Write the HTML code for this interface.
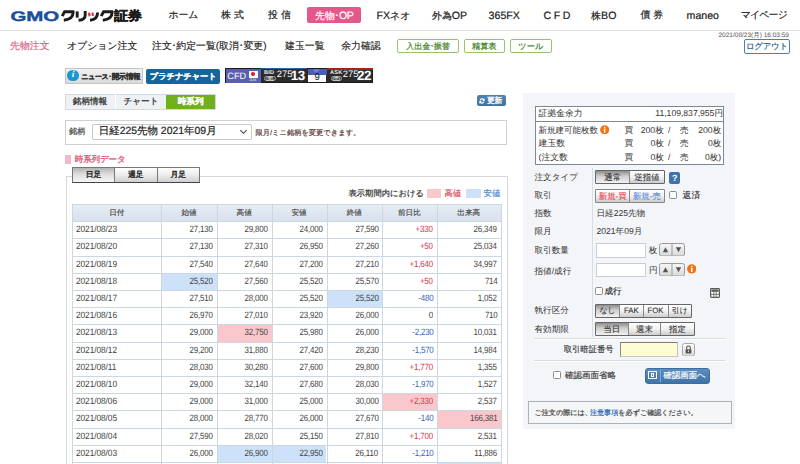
<!DOCTYPE html>
<html><head><meta charset="utf-8">
<style>
*{margin:0;padding:0;box-sizing:border-box}
html,body{width:800px;height:464px;overflow:hidden;background:#fff}
body{position:relative;font-family:"Liberation Sans",sans-serif;color:#333;text-rendering:geometricPrecision}
.a{position:absolute;white-space:nowrap}
.nav{top:10.3px;font-size:9.9px;color:#222;line-height:12px;-webkit-text-stroke:0.2px currentColor}
.l{font-size:10.6px}
.sub{top:40.6px;font-size:9.9px;color:#222;line-height:12px;-webkit-text-stroke:0.15px currentColor}
.gbtn{top:38.8px;height:14.4px;border:1px solid #93c46f;border-radius:2px;color:#3f7f24;font-size:8.2px;line-height:13.8px;text-align:center;-webkit-text-stroke:0.2px currentColor}

.th{height:17.25px;line-height:17.25px;font-size:7.6px;color:#444;text-align:center;-webkit-text-stroke:0.15px #444}
.td{height:17.2px;line-height:16px;font-size:9.1px;color:#444;letter-spacing:-0.2px;transform:scaleX(0.87);transform-origin:100% 50%}
.dd{letter-spacing:-0.1px;transform:scaleX(0.92);transform-origin:0 50%}
.hl{left:72.25px;width:428.45px;height:1px;background:#cdd7e1}
.vl{top:204px;height:262px;width:1px;background:#cdd7e1}
.tab{top:94px;height:15.5px;line-height:15.5px;font-size:8.6px;color:#444;text-align:center;font-weight:bold}
.dt{top:167px;height:15.5px;line-height:14px;font-size:7.8px;color:#222;text-align:center;-webkit-text-stroke:0.35px #222;border:1px solid #777;border-bottom-color:#444;background:linear-gradient(#ffffff,#ececec 50%,#cfcfcf)}
.lbl{left:534.5px;font-size:8.6px;color:#333;line-height:10px}
.val{left:596.5px;font-size:8.6px;color:#333;line-height:10px}
.sbtn{border:1px solid #8a8a8a;background:linear-gradient(#fff,#e0e0e0);font-size:8.2px;color:#333;text-align:center}
</style></head><body>

<!-- HEADER -->
<svg class="a" style="left:0;top:0" width="150" height="30">
<text x="10.4" y="20.5" font-family="Liberation Sans" font-weight="bold" font-size="13.8" fill="#1a4f9c" stroke="#1a4f9c" stroke-width="0.4" textLength="48.9" lengthAdjust="spacingAndGlyphs">GMO</text>
<g fill="none" stroke="#1c1c1c" stroke-width="2.9" stroke-linecap="butt" stroke-linejoin="round">
<path d="M62.2 16.2L64.6 11.6"/>
<path d="M63.6 11.8H73.2C73.2 16.5 70.5 19.6 63.8 20.2"/>
<path d="M77.2 11.4V17.6"/>
<path d="M85.2 11V15.2C85.2 18.4 83.2 19.9 78.6 20.3"/>
<path d="M97.6 12.6C97.6 17.2 95.4 19.8 90 20.3"/>
<path d="M101.2 16.2L103.6 11.6"/>
<path d="M102.6 11.8H112.2C112.2 16.5 109.5 19.6 102.8 20.2"/>
</g>
<g fill="none" stroke="#d8283a" stroke-width="2.1">
<path d="M89 12.8L89.6 16.2"/>
<path d="M92.4 12.6L92.9 15.8"/>
</g>

<text x="114.3" y="20.2" font-weight="bold" font-size="12.6" fill="#1a1a1a" textLength="27.6" lengthAdjust="spacingAndGlyphs" stroke="#1a1a1a" stroke-width="0.5">証券</text>
</svg>
<div class="a nav" style="left:168.4px">ホーム</div>
<div class="a nav" style="left:221px;letter-spacing:3px">株式</div>
<div class="a nav" style="left:268px;letter-spacing:3px">投信</div>
<div class="a" style="left:307px;top:6.5px;width:54px;height:16.5px;background:#e4578a;border-radius:2px"></div>
<div class="a nav" style="left:315px;color:#fff">先物<span style="margin:0 -0.4px">･</span><span class="l" style="letter-spacing:-0.3px">OP</span></div>
<div class="a nav" style="left:376.5px"><span class="l">FX</span>ネオ</div>
<div class="a nav" style="left:432px">外為<span class="l">OP</span></div>
<div class="a nav l" style="left:488.6px">365FX</div>
<div class="a nav l" style="left:543.5px;letter-spacing:2.6px">CFD</div>
<div class="a nav" style="left:591px">株<span class="l" style="letter-spacing:0.3px">BO</span></div>
<div class="a nav" style="left:640.4px;letter-spacing:3px">債券</div>
<div class="a nav l" style="left:686.6px">maneo</div>
<div class="a nav" style="left:740.7px;letter-spacing:-0.8px">マイページ</div>
<div class="a" style="left:0;top:30px;width:800px;height:1px;background:#e2e2e2"></div>

<!-- SUBNAV -->
<div class="a sub" style="left:10px;color:#d9607f">先物注文</div>
<div class="a sub" style="left:67px">オプション注文</div>
<div class="a sub" style="left:152px">注文<span style="margin:0 -0.2px">･</span>約定一覧(取消<span style="margin:0 -0.2px">･</span>変更)</div>
<div class="a sub" style="left:285px">建玉一覧</div>
<div class="a sub" style="left:341.2px">余力確認</div>
<div class="a gbtn" style="left:397px;width:62px">入出金<span style="margin:0 -0.5px">･</span>振替</div>
<div class="a gbtn" style="left:464px;width:40.5px">精算表</div>
<div class="a gbtn" style="left:510px;width:41.6px">ツール</div>
<div class="a" style="left:718.5px;top:31.5px;font-size:6.5px;color:#555;line-height:7px">2021/08/23(月) 16:03:59</div>
<div class="a" style="left:743.7px;top:38.7px;width:46.5px;height:15px;border:1px solid #4a7fb5;border-radius:2px;color:#2c5d8f;font-size:8.4px;line-height:13px;text-align:center;letter-spacing:-0.2px;-webkit-text-stroke:0.2px currentColor">ログアウト</div>


<!-- TOOLBAR -->
<div class="a" style="left:64.9px;top:68.2px;width:78px;height:15.7px;border:1px solid #c2c6ca;background:linear-gradient(#f2f2f2,#dadada)"></div>
<div class="a" style="left:67.3px;top:69.9px;width:11.5px;height:11.5px;border-radius:50%;background:#1b98cf;color:#fff;font-size:9.5px;line-height:11.5px;text-align:center;font-weight:bold;font-style:italic;font-family:'Liberation Serif',serif">i</div>
<div class="a" style="left:81.2px;top:72.2px;font-size:7px;line-height:9px;color:#333;font-weight:bold;letter-spacing:-0.3px;-webkit-text-stroke:0.2px #333">ニュース<span style="margin:0 0.2px 0 -0.2px">･</span><span style="font-size:7.6px;letter-spacing:-0.45px">開示情報</span></div>
<div class="a" style="left:146.4px;top:68.8px;width:73.6px;height:15px;border-radius:2px;background:#15649a;color:#fff;font-size:8.2px;line-height:15px;text-align:center;font-weight:bold;-webkit-text-stroke:0.2px #fff">プラチナチャート</div>

<!-- CFD ticker -->
<div class="a" style="left:225px;top:68.2px;width:147.5px;height:15px;background:#2b2b2b;border:1px solid #1c1c1c"></div>
<div class="a" style="left:225.6px;top:69px;width:35px;height:13.5px;background:#5a5fae"></div>
<div class="a" style="left:227.3px;top:69.5px;font-size:9.2px;line-height:12px;color:#fff">CFD</div>
<div class="a" style="left:248.5px;top:70.5px;width:9px;height:7.5px;background:#fbfbfb"></div>
<div class="a" style="left:251px;top:72.3px;width:4px;height:4px;border-radius:50%;background:#d81c2c"></div>
<div class="a" style="left:249.3px;top:78.3px;font-size:3.6px;line-height:4px;color:#ddd;font-weight:bold">JUS</div>
<div class="a" style="left:261px;top:68.2px;width:46px;height:1.3px;background:#2f63a8"></div>
<div class="a" style="left:327px;top:68.2px;width:45.5px;height:1.6px;background:#a52222"></div>
<div class="a" style="left:264px;top:70px;font-size:5.6px;line-height:6px;color:#f4f4f4;font-weight:bold;letter-spacing:0.2px">BID</div>
<div class="a" style="left:264.3px;top:76.4px;width:11.5px;height:4.8px;border-radius:2.4px;border:0.8px solid #aaa"></div>
<div class="a" style="left:266.3px;top:76.3px;font-size:4.2px;line-height:5px;color:#eee;font-weight:bold">(買)</div>
<div class="a" style="left:276.8px;top:69.4px;font-size:9.4px;line-height:9px;color:#fff">275</div>
<div class="a" style="left:290.8px;top:69.2px;font-size:13.4px;line-height:13px;color:#fff;font-weight:bold;letter-spacing:-0.4px">13</div>
<div class="a" style="left:307.5px;top:68.6px;width:19px;height:6px;background:#4a5db8"></div>
<div class="a" style="left:313.5px;top:68.4px;font-size:4px;line-height:5px;color:#b9c0ff">SP</div>
<div class="a" style="left:308px;top:74.5px;width:18px;height:7.8px;background:#fbfbfb"></div>
<div class="a" style="left:314.6px;top:72.8px;font-size:9.5px;line-height:10px;color:#111">9</div>
<div class="a" style="left:330px;top:70px;font-size:5.6px;line-height:6px;color:#f4f4f4;font-weight:bold;letter-spacing:0.2px">ASK</div>
<div class="a" style="left:330.8px;top:76.4px;width:11.5px;height:4.8px;border-radius:2.4px;border:0.8px solid #aaa"></div>
<div class="a" style="left:332.8px;top:76.3px;font-size:4.2px;line-height:5px;color:#eee;font-weight:bold">(売)</div>
<div class="a" style="left:342.8px;top:69.4px;font-size:9.4px;line-height:9px;color:#fff">275</div>
<div class="a" style="left:357px;top:69.2px;font-size:13.4px;line-height:13px;color:#fff;font-weight:bold;letter-spacing:-0.4px">22</div>

<!-- TABS -->
<div class="a" style="left:65px;top:93.6px;width:151px;height:16px;border:1px solid #d3d9df;background:#eef2f5"></div>
<div class="a tab" style="left:65px;width:50px">銘柄情報</div>
<div class="a" style="left:115px;top:94px;width:1px;height:15px;background:#fff"></div>
<div class="a tab" style="left:116px;width:50px">チャート</div>
<div class="a tab" style="left:166px;top:94.8px;height:13.8px;line-height:13.8px;width:49.2px;background:#6fb01c;color:#fff;font-weight:bold;-webkit-text-stroke:0.2px #fff">時系列</div>
<div class="a" style="left:477.2px;top:95.1px;width:28.7px;height:11.3px;border-radius:2px;background:linear-gradient(#5581b0,#41709f)"></div>
<svg class="a" style="left:479.3px;top:97.8px" width="6" height="6" viewBox="0 0 6 6"><path d="M4.9 1.9A2.2 2.2 0 0 0 1.1 2.2M1.1 4.1A2.2 2.2 0 0 0 4.9 3.8" fill="none" stroke="#fff" stroke-width="1.2"/><path d="M5.7 0.3V2.9H3.1Z" fill="#fff"/><path d="M0.3 5.7V3.1H2.9Z" fill="#fff"/></svg>
<div class="a" style="left:487px;top:96px;font-size:7.9px;line-height:10px;color:#fff;-webkit-text-stroke:0.3px #fff;letter-spacing:-0.3px">更新</div>

<!-- SELECT -->
<div class="a" style="left:65px;top:120px;width:442.4px;height:24.6px;border:1px solid #ccd1d6"></div>
<div class="a" style="left:69px;top:127px;font-size:8.2px;line-height:10px;color:#555;-webkit-text-stroke:0.25px #555">銘柄</div>
<div class="a" style="left:92px;top:124px;width:160px;height:16px;border:1px solid #c9c9c9;border-radius:2px;background:#fff"></div>
<div class="a" style="left:98.8px;top:126.2px;font-size:10.45px;line-height:12px;color:#222;-webkit-text-stroke:0.2px #222">日経225先物 2021年09月</div>
<div class="a" style="left:241px;top:128px;width:5px;height:5px;border-right:1.3px solid #444;border-bottom:1.3px solid #444;transform:rotate(45deg)"></div>
<div class="a" style="left:255.6px;top:127.6px;font-size:7.25px;line-height:9px;color:#5e3c3c;-webkit-text-stroke:0.2px #5e3c3c">限月/ミニ銘柄を変更できます。</div>

<!-- DATA HEADING -->
<div class="a" style="left:65.3px;top:154.6px;width:5.7px;height:9px;background:#f3b9c9"></div>
<div class="a" style="left:74.8px;top:154px;font-size:8.5px;line-height:11px;color:#e0607f;letter-spacing:-0.1px;-webkit-text-stroke:0.35px #e0607f">時系列データ</div>
<div class="a" style="left:65.5px;top:175.5px;width:442px;height:300px;border:1px solid #d5d9dd"></div>
<div class="a dt" style="left:72px;width:43px;background:linear-gradient(#b4b4b4,#dedede 45%,#f6f6f6)">日足</div>
<div class="a dt" style="left:114px;width:43.5px">週足</div>
<div class="a dt" style="left:156.5px;width:43.5px">月足</div>
<div class="a" style="left:348.5px;top:187.6px;font-size:8.3px;line-height:10px;color:#333;-webkit-text-stroke:0.2px #333">表示期間内における</div>
<div class="a" style="left:427px;top:188.6px;width:14px;height:9.8px;background:#fac8cc"></div>
<div class="a" style="left:444.5px;top:187.6px;font-size:8.3px;line-height:10px;color:#e04858;-webkit-text-stroke:0.2px #e04858">高値</div>
<div class="a" style="left:466px;top:188.6px;width:14.6px;height:9.8px;background:#cde2f8"></div>
<div class="a" style="left:483.6px;top:187.6px;font-size:8.3px;line-height:10px;color:#4a88d8;-webkit-text-stroke:0.2px #4a88d8">安値</div>

<div class="a" style="left:72.25px;top:204.00px;width:428.45px;height:17.25px;background:linear-gradient(#e6edf5,#d8e2ed)"></div>
<div class="a th" style="left:72.25px;top:204.00px;width:89.00px">日付</div>
<div class="a th" style="left:161.25px;top:204.00px;width:55.45px">始値</div>
<div class="a th" style="left:216.70px;top:204.00px;width:55.00px">高値</div>
<div class="a th" style="left:271.70px;top:204.00px;width:54.80px">安値</div>
<div class="a th" style="left:326.50px;top:204.00px;width:55.50px">終値</div>
<div class="a th" style="left:382.00px;top:204.00px;width:54.70px">前日比</div>
<div class="a th" style="left:436.70px;top:204.00px;width:64.00px">出来高</div>
<div class="a td dd" style="left:75.65px;top:221.25px">2021/08/23</div>
<div class="a td" style="right:586.90px;top:221.25px;">27,130</div>
<div class="a td" style="right:531.90px;top:221.25px;">29,800</div>
<div class="a td" style="right:477.10px;top:221.25px;">24,000</div>
<div class="a td" style="right:421.60px;top:221.25px;">27,590</div>
<div class="a td" style="right:366.90px;top:221.25px;color:#d8344f;">+330</div>
<div class="a td" style="right:302.90px;top:221.25px;">26,349</div>
<div class="a td dd" style="left:75.65px;top:238.45px">2021/08/20</div>
<div class="a td" style="right:586.90px;top:238.45px;">27,130</div>
<div class="a td" style="right:531.90px;top:238.45px;">27,310</div>
<div class="a td" style="right:477.10px;top:238.45px;">26,950</div>
<div class="a td" style="right:421.60px;top:238.45px;">27,260</div>
<div class="a td" style="right:366.90px;top:238.45px;color:#d8344f;">+50</div>
<div class="a td" style="right:302.90px;top:238.45px;">25,034</div>
<div class="a td dd" style="left:75.65px;top:255.65px">2021/08/19</div>
<div class="a td" style="right:586.90px;top:255.65px;">27,540</div>
<div class="a td" style="right:531.90px;top:255.65px;">27,640</div>
<div class="a td" style="right:477.10px;top:255.65px;">27,200</div>
<div class="a td" style="right:421.60px;top:255.65px;">27,210</div>
<div class="a td" style="right:366.90px;top:255.65px;color:#d8344f;">+1,640</div>
<div class="a td" style="right:302.90px;top:255.65px;">34,997</div>
<div class="a" style="left:161.25px;top:272.85px;width:55.45px;height:17.20px;background:#cde2f8"></div>
<div class="a td dd" style="left:75.65px;top:272.85px">2021/08/18</div>
<div class="a td" style="right:586.90px;top:272.85px;">25,520</div>
<div class="a td" style="right:531.90px;top:272.85px;">27,560</div>
<div class="a td" style="right:477.10px;top:272.85px;">25,520</div>
<div class="a td" style="right:421.60px;top:272.85px;">25,570</div>
<div class="a td" style="right:366.90px;top:272.85px;color:#d8344f;">+50</div>
<div class="a td" style="right:302.90px;top:272.85px;">714</div>
<div class="a" style="left:326.50px;top:290.05px;width:55.50px;height:17.20px;background:#cde2f8"></div>
<div class="a td dd" style="left:75.65px;top:290.05px">2021/08/17</div>
<div class="a td" style="right:586.90px;top:290.05px;">27,510</div>
<div class="a td" style="right:531.90px;top:290.05px;">28,000</div>
<div class="a td" style="right:477.10px;top:290.05px;">25,520</div>
<div class="a td" style="right:421.60px;top:290.05px;">25,520</div>
<div class="a td" style="right:366.90px;top:290.05px;color:#3a63b8;">-480</div>
<div class="a td" style="right:302.90px;top:290.05px;">1,052</div>
<div class="a td dd" style="left:75.65px;top:307.25px">2021/08/16</div>
<div class="a td" style="right:586.90px;top:307.25px;">26,970</div>
<div class="a td" style="right:531.90px;top:307.25px;">27,010</div>
<div class="a td" style="right:477.10px;top:307.25px;">23,920</div>
<div class="a td" style="right:421.60px;top:307.25px;">26,000</div>
<div class="a td" style="right:366.90px;top:307.25px;">0</div>
<div class="a td" style="right:302.90px;top:307.25px;">710</div>
<div class="a" style="left:216.70px;top:324.45px;width:55.00px;height:17.20px;background:#fac8cc"></div>
<div class="a td dd" style="left:75.65px;top:324.45px">2021/08/13</div>
<div class="a td" style="right:586.90px;top:324.45px;">29,000</div>
<div class="a td" style="right:531.90px;top:324.45px;">32,750</div>
<div class="a td" style="right:477.10px;top:324.45px;">25,980</div>
<div class="a td" style="right:421.60px;top:324.45px;">26,000</div>
<div class="a td" style="right:366.90px;top:324.45px;color:#3a63b8;">-2,230</div>
<div class="a td" style="right:302.90px;top:324.45px;">10,031</div>
<div class="a td dd" style="left:75.65px;top:341.65px">2021/08/12</div>
<div class="a td" style="right:586.90px;top:341.65px;">29,200</div>
<div class="a td" style="right:531.90px;top:341.65px;">31,880</div>
<div class="a td" style="right:477.10px;top:341.65px;">27,420</div>
<div class="a td" style="right:421.60px;top:341.65px;">28,230</div>
<div class="a td" style="right:366.90px;top:341.65px;color:#3a63b8;">-1,570</div>
<div class="a td" style="right:302.90px;top:341.65px;">14,984</div>
<div class="a td dd" style="left:75.65px;top:358.85px">2021/08/11</div>
<div class="a td" style="right:586.90px;top:358.85px;">28,030</div>
<div class="a td" style="right:531.90px;top:358.85px;">30,280</div>
<div class="a td" style="right:477.10px;top:358.85px;">27,600</div>
<div class="a td" style="right:421.60px;top:358.85px;">29,800</div>
<div class="a td" style="right:366.90px;top:358.85px;color:#d8344f;">+1,770</div>
<div class="a td" style="right:302.90px;top:358.85px;">1,355</div>
<div class="a td dd" style="left:75.65px;top:376.05px">2021/08/10</div>
<div class="a td" style="right:586.90px;top:376.05px;">29,000</div>
<div class="a td" style="right:531.90px;top:376.05px;">32,140</div>
<div class="a td" style="right:477.10px;top:376.05px;">27,680</div>
<div class="a td" style="right:421.60px;top:376.05px;">28,030</div>
<div class="a td" style="right:366.90px;top:376.05px;color:#3a63b8;">-1,970</div>
<div class="a td" style="right:302.90px;top:376.05px;">1,527</div>
<div class="a" style="left:382.00px;top:393.25px;width:54.70px;height:17.20px;background:#fac8cc"></div>
<div class="a td dd" style="left:75.65px;top:393.25px">2021/08/06</div>
<div class="a td" style="right:586.90px;top:393.25px;">29,000</div>
<div class="a td" style="right:531.90px;top:393.25px;">31,000</div>
<div class="a td" style="right:477.10px;top:393.25px;">25,000</div>
<div class="a td" style="right:421.60px;top:393.25px;">30,000</div>
<div class="a td" style="right:366.90px;top:393.25px;color:#d8344f;">+2,330</div>
<div class="a td" style="right:302.90px;top:393.25px;">2,537</div>
<div class="a" style="left:436.70px;top:410.45px;width:64.00px;height:17.20px;background:#fac8cc"></div>
<div class="a td dd" style="left:75.65px;top:410.45px">2021/08/05</div>
<div class="a td" style="right:586.90px;top:410.45px;">28,000</div>
<div class="a td" style="right:531.90px;top:410.45px;">28,770</div>
<div class="a td" style="right:477.10px;top:410.45px;">26,000</div>
<div class="a td" style="right:421.60px;top:410.45px;">27,670</div>
<div class="a td" style="right:366.90px;top:410.45px;color:#3a63b8;">-140</div>
<div class="a td" style="right:302.90px;top:410.45px;">166,381</div>
<div class="a td dd" style="left:75.65px;top:427.65px">2021/08/04</div>
<div class="a td" style="right:586.90px;top:427.65px;">27,590</div>
<div class="a td" style="right:531.90px;top:427.65px;">28,020</div>
<div class="a td" style="right:477.10px;top:427.65px;">25,150</div>
<div class="a td" style="right:421.60px;top:427.65px;">27,810</div>
<div class="a td" style="right:366.90px;top:427.65px;color:#d8344f;">+1,700</div>
<div class="a td" style="right:302.90px;top:427.65px;">2,531</div>
<div class="a" style="left:216.70px;top:444.85px;width:55.00px;height:17.20px;background:#cde2f8"></div>
<div class="a" style="left:271.70px;top:444.85px;width:54.80px;height:17.20px;background:#cde2f8"></div>
<div class="a td dd" style="left:75.65px;top:444.85px">2021/08/03</div>
<div class="a td" style="right:586.90px;top:444.85px;">26,000</div>
<div class="a td" style="right:531.90px;top:444.85px;">26,900</div>
<div class="a td" style="right:477.10px;top:444.85px;">22,950</div>
<div class="a td" style="right:421.60px;top:444.85px;">26,110</div>
<div class="a td" style="right:366.90px;top:444.85px;color:#3a63b8;">-1,210</div>
<div class="a td" style="right:302.90px;top:444.85px;">11,886</div>
<div class="a" style="left:436.70px;top:462.05px;width:64.00px;height:17.20px;background:#cde2f8"></div>
<div class="a td dd" style="left:75.65px;top:462.05px">2021/08/02</div>
<div class="a td" style="right:586.90px;top:462.05px;">26,000</div>
<div class="a td" style="right:531.90px;top:462.05px;">26,900</div>
<div class="a td" style="right:477.10px;top:462.05px;">22,950</div>
<div class="a td" style="right:421.60px;top:462.05px;">26,110</div>
<div class="a td" style="right:366.90px;top:462.05px;color:#3a63b8;">-1,210</div>
<div class="a td" style="right:302.90px;top:462.05px;">11,886</div>
<div class="a hl" style="top:204.00px"></div>
<div class="a hl" style="top:221.25px"></div>
<div class="a hl" style="top:238.45px"></div>
<div class="a hl" style="top:255.65px"></div>
<div class="a hl" style="top:272.85px"></div>
<div class="a hl" style="top:290.05px"></div>
<div class="a hl" style="top:307.25px"></div>
<div class="a hl" style="top:324.45px"></div>
<div class="a hl" style="top:341.65px"></div>
<div class="a hl" style="top:358.85px"></div>
<div class="a hl" style="top:376.05px"></div>
<div class="a hl" style="top:393.25px"></div>
<div class="a hl" style="top:410.45px"></div>
<div class="a hl" style="top:427.65px"></div>
<div class="a hl" style="top:444.85px"></div>
<div class="a hl" style="top:462.05px"></div>
<div class="a vl" style="left:72.25px"></div>
<div class="a vl" style="left:161.25px"></div>
<div class="a vl" style="left:216.70px"></div>
<div class="a vl" style="left:271.70px"></div>
<div class="a vl" style="left:326.50px"></div>
<div class="a vl" style="left:382.00px"></div>
<div class="a vl" style="left:436.70px"></div>
<div class="a vl" style="left:500.70px"></div>

<!-- RIGHT PANEL -->
<div class="a" style="left:522.8px;top:93.3px;width:212.7px;height:335.3px;background:#f3f5f8"></div>
<div class="a" style="left:534.5px;top:105.5px;width:189px;height:59px;border:1px solid #7b8896;background:#fff"></div>
<div class="a" style="left:535px;top:121px;width:188px;height:1px;background:#7b8896"></div>
<div class="a lbl" style="font-size:8.8px;left:538.6px;top:108px">証拠金余力</div>
<div class="a" style="right:77px;top:108px;font-size:8.6px;line-height:10px;color:#333">11,109,837,955円</div>
<div class="a lbl" style="font-size:8.5px;left:538.6px;top:124.7px">新規建可能枚数</div>
<svg class="a" style="left:599.6px;top:124.8px" width="9.3" height="9.5" viewBox="0 0 10 10"><circle cx="5" cy="5" r="4.9" fill="#f07412"/><circle cx="5" cy="2.6" r="0.9" fill="#fff"/><rect x="4.2" y="4" width="1.6" height="4.2" fill="#fff"/></svg>
<div class="a lbl" style="font-size:8.8px;left:538.6px;top:138px">建玉数</div>
<div class="a lbl" style="font-size:8.8px;left:538.6px;top:152px">(注文数</div>
<div class="a" style="left:624.5px;top:124.5px;font-size:8.6px;line-height:10px;color:#333">買</div>
<div class="a" style="right:136.25px;top:124.5px;font-size:8.6px;line-height:10px;color:#333">200枚</div>
<div class="a" style="left:668px;top:124.5px;font-size:8.6px;line-height:10px;color:#333">/</div>
<div class="a" style="left:680px;top:124.5px;font-size:8.6px;line-height:10px;color:#333">売</div>
<div class="a" style="right:78.75px;top:124.5px;font-size:8.6px;line-height:10px;color:#333">200枚</div>
<div class="a" style="left:624.5px;top:138px;font-size:8.6px;line-height:10px;color:#333">買</div>
<div class="a" style="right:136.25px;top:138px;font-size:8.6px;line-height:10px;color:#333">0枚</div>
<div class="a" style="left:668px;top:138px;font-size:8.6px;line-height:10px;color:#333">/</div>
<div class="a" style="left:680px;top:138px;font-size:8.6px;line-height:10px;color:#333">売</div>
<div class="a" style="right:78.75px;top:138px;font-size:8.6px;line-height:10px;color:#333">0枚</div>
<div class="a" style="left:624.5px;top:152px;font-size:8.6px;line-height:10px;color:#333">買</div>
<div class="a" style="right:136.25px;top:152px;font-size:8.6px;line-height:10px;color:#333">0枚</div>
<div class="a" style="left:668px;top:152px;font-size:8.6px;line-height:10px;color:#333">/</div>
<div class="a" style="left:680px;top:152px;font-size:8.6px;line-height:10px;color:#333">売</div>
<div class="a" style="right:78.75px;top:152px;font-size:8.6px;line-height:10px;color:#333">0枚)</div>

<div class="a" style="left:592px;top:168px;width:1px;height:169px;background:#d9dde1"></div>
<div class="a lbl" style="top:171.7px">注文タイプ</div>
<div class="a" style="left:595.30px;top:170.00px;width:69.30px;height:14.00px;border:1px solid #666;border-radius:1px;background:#888"></div>
<div class="a" style="left:596.30px;top:171.00px;width:32.90px;height:12.00px;background:linear-gradient(#8e8e8e,#d0d0d0 45%,#f2f2f2);color:#333;font-size:8.4px;line-height:12.00px;text-align:center;-webkit-text-stroke:0.1px #333">通常</div>
<div class="a" style="left:630.20px;top:171.00px;width:33.40px;height:12.00px;background:linear-gradient(#ffffff,#f1f1f1 50%,#cdcdcd);color:#333;font-size:8.4px;line-height:12.00px;text-align:center;-webkit-text-stroke:0.1px #333">逆指値</div>
<div class="a" style="left:669px;top:172px;width:11.4px;height:12px;border-radius:2px;background:#3f73a8;color:#fff;font-size:9px;line-height:12px;text-align:center;font-weight:bold">?</div>
<div class="a lbl" style="top:190.4px">取引</div>
<div class="a" style="left:595.30px;top:188.60px;width:69.30px;height:14.20px;border:1px solid #888;border-radius:1px;background:#888"></div>
<div class="a" style="left:596.30px;top:189.60px;width:32.90px;height:12.20px;background:linear-gradient(#ffffff,#f1f1f1 50%,#cdcdcd);color:#e8404a;font-size:8.4px;line-height:12.20px;text-align:center;-webkit-text-stroke:0.1px #e8404a">新規-買</div>
<div class="a" style="left:630.20px;top:189.60px;width:33.40px;height:12.20px;background:linear-gradient(#ffffff,#f1f1f1 50%,#cdcdcd);color:#5a8ad8;font-size:8.4px;line-height:12.20px;text-align:center;-webkit-text-stroke:0.1px #5a8ad8">新規-売</div>
<div class="a" style="left:669px;top:190.6px;width:8px;height:8.4px;border:1.2px solid #8c8c8c;background:#fff;border-radius:1.8px"></div>
<div class="a" style="left:682.6px;top:190px;font-size:8.8px;line-height:10px;color:#333;-webkit-text-stroke:0.15px #333">返済</div>
<div class="a lbl" style="top:208.4px">指数</div>
<div class="a val" style="top:208.4px">日経225先物</div>
<div class="a lbl" style="top:226.4px">限月</div>
<div class="a val" style="top:226.4px">2021年09月</div>
<div class="a lbl" style="top:245px">取引数量</div>
<div class="a" style="left:595.5px;top:243px;width:50px;height:14.5px;border:1px solid #c9ced3;background:#fff"></div>
<div class="a" style="left:648.75px;top:245px;font-size:8.6px;line-height:10px;color:#333">枚</div>
<div class="a lbl" style="top:266px">指値/成行</div>
<div class="a" style="left:595.5px;top:262.5px;width:50px;height:14.5px;border:1px solid #c9ced3;background:#fff"></div>
<div class="a" style="left:649px;top:264.5px;font-size:8.6px;line-height:10px;color:#333">円</div>
<svg class="a" style="left:686.8px;top:264px" width="9.5" height="9.8" viewBox="0 0 10 10"><circle cx="5" cy="5" r="4.9" fill="#f07412"/><circle cx="5" cy="2.6" r="0.9" fill="#fff"/><rect x="4.2" y="4" width="1.6" height="4.2" fill="#fff"/></svg>

<svg class="a" style="left:659px;top:242.8px" width="26" height="13.5" viewBox="0 0 26 13.5">
<defs><linearGradient id="ag" x1="0" y1="0" x2="0" y2="1"><stop offset="0" stop-color="#f7f7f7"/><stop offset="1" stop-color="#d9d9d9"/></linearGradient></defs>
<rect x="0.5" y="0.5" width="25" height="12.5" rx="2" fill="url(#ag)" stroke="#9a9a9a"/>
<line x1="13" y1="0.5" x2="13" y2="13" stroke="#9a9a9a"/>
<path d="M3.8 9.2 L9.2 9.2 L6.5 4.3 Z" fill="#555"/>
<path d="M16.8 4.3 L22.2 4.3 L19.5 9.2 Z" fill="#555"/>
</svg>
<svg class="a" style="left:659px;top:262.5px" width="26" height="13.5" viewBox="0 0 26 13.5">
<defs><linearGradient id="ag" x1="0" y1="0" x2="0" y2="1"><stop offset="0" stop-color="#f7f7f7"/><stop offset="1" stop-color="#d9d9d9"/></linearGradient></defs>
<rect x="0.5" y="0.5" width="25" height="12.5" rx="2" fill="url(#ag)" stroke="#9a9a9a"/>
<line x1="13" y1="0.5" x2="13" y2="13" stroke="#9a9a9a"/>
<path d="M3.8 9.2 L9.2 9.2 L6.5 4.3 Z" fill="#555"/>
<path d="M16.8 4.3 L22.2 4.3 L19.5 9.2 Z" fill="#555"/>
</svg>
<svg class="a" style="left:710px;top:287.5px" width="10" height="10" viewBox="0 0 10 10">
<rect x="0.6" y="0.6" width="8.8" height="8.8" rx="0.8" fill="#fff" stroke="#5a5a5a" stroke-width="1.2"/>
<rect x="1.5" y="1.5" width="7" height="2.3" fill="#5a5a5a"/>
<path d="M3.8 3.8V9M6.2 3.8V9M1 6.4H9" stroke="#5a5a5a" stroke-width="0.8"/>
</svg>
<div class="a" style="left:595.3px;top:286.9px;width:7.8px;height:8.4px;border:1.2px solid #8c8c8c;background:#fff;border-radius:1.8px"></div>
<div class="a" style="left:604.5px;top:286px;font-size:8.6px;line-height:10px;color:#333;-webkit-text-stroke:0.2px #333">成行</div>
<div class="a lbl" style="top:305px">執行区分</div>
<div class="a" style="left:595.00px;top:303.50px;width:97.00px;height:14.00px;border:1px solid #666;border-radius:1px;background:#888"></div>
<div class="a" style="left:596.00px;top:304.50px;width:23.00px;height:12.00px;background:linear-gradient(#8e8e8e,#d0d0d0 45%,#f2f2f2);color:#333;font-size:7.8px;line-height:12.00px;text-align:center;-webkit-text-stroke:0.1px #333">なし</div>
<div class="a" style="left:620.00px;top:304.50px;width:22.50px;height:12.00px;background:linear-gradient(#ffffff,#f1f1f1 50%,#cdcdcd);color:#333;font-size:7.8px;line-height:12.00px;text-align:center;-webkit-text-stroke:0.1px #333">FAK</div>
<div class="a" style="left:643.50px;top:304.50px;width:24.00px;height:12.00px;background:linear-gradient(#ffffff,#f1f1f1 50%,#cdcdcd);color:#333;font-size:7.8px;line-height:12.00px;text-align:center;-webkit-text-stroke:0.1px #333">FOK</div>
<div class="a" style="left:668.50px;top:304.50px;width:22.50px;height:12.00px;background:linear-gradient(#ffffff,#f1f1f1 50%,#cdcdcd);color:#333;font-size:7.8px;line-height:12.00px;text-align:center;-webkit-text-stroke:0.1px #333">引け</div>
<div class="a lbl" style="top:323.5px">有効期限</div>
<div class="a" style="left:595.00px;top:321.75px;width:99.50px;height:14.25px;border:1px solid #666;border-radius:1px;background:#888"></div>
<div class="a" style="left:596.00px;top:322.75px;width:31.50px;height:12.25px;background:linear-gradient(#8e8e8e,#d0d0d0 45%,#f2f2f2);color:#333;font-size:8.4px;line-height:12.25px;text-align:center;-webkit-text-stroke:0.1px #333">当日</div>
<div class="a" style="left:628.50px;top:322.75px;width:31.75px;height:12.25px;background:linear-gradient(#ffffff,#f1f1f1 50%,#cdcdcd);color:#333;font-size:8.4px;line-height:12.25px;text-align:center;-webkit-text-stroke:0.1px #333">週末</div>
<div class="a" style="left:661.25px;top:322.75px;width:32.25px;height:12.25px;background:linear-gradient(#ffffff,#f1f1f1 50%,#cdcdcd);color:#333;font-size:8.4px;line-height:12.25px;text-align:center;-webkit-text-stroke:0.1px #333">指定</div>
<div class="a" style="left:534px;top:337.8px;width:191px;height:1px;background:#d6dadd"></div><div class="a" style="left:534px;top:338.8px;width:191px;height:1px;background:#fff"></div>
<div class="a" style="left:563.75px;top:343.5px;font-size:8.3px;line-height:10px;color:#333;-webkit-text-stroke:0.15px #333">取引暗証番号</div>
<div class="a" style="left:619.5px;top:341.75px;width:58.75px;height:15px;border:1px solid #9a9a9a;border-top-color:#7a7a7a;border-left-color:#8a8a8a;border-bottom-color:#c8c8c8;border-right-color:#c0c0c0;background:#fefcd2"></div>
<svg class="a" style="left:682px;top:342.8px" width="13" height="13.5" viewBox="0 0 13 13.5"><defs><linearGradient id="lg" x1="0" y1="0" x2="0" y2="1"><stop offset="0" stop-color="#fdfdfd"/><stop offset="1" stop-color="#dedede"/></linearGradient></defs><rect x="0.5" y="0.5" width="12" height="12.5" rx="2" fill="url(#lg)" stroke="#a8a8a8"/><path d="M4.6 6.3V4.9A1.9 1.9 0 0 1 8.4 4.9V6.3" fill="none" stroke="#555" stroke-width="1.1"/><rect x="3.6" y="6.2" width="5.8" height="4.4" rx="0.6" fill="#555"/><rect x="6.1" y="7.3" width="0.9" height="1.8" fill="#ddd"/></svg>
<div class="a" style="left:533.5px;top:359.6px;width:191.5px;height:1px;background:#d6dadd"></div><div class="a" style="left:533.5px;top:360.6px;width:191.5px;height:1px;background:#fff"></div>
<div class="a" style="left:552.8px;top:371px;width:8.3px;height:8.3px;border:1px solid #8a8a8a;background:#fff;border-radius:1.5px"></div>
<div class="a" style="left:565px;top:369.5px;font-size:8.5px;line-height:10px;color:#333;-webkit-text-stroke:0.15px #333">確認画面省略</div>
<div class="a" style="left:644.5px;top:367.5px;width:65px;height:16px;border-radius:3px;background:linear-gradient(#5b8cc0,#3f73a8);border:1px solid #3b6ea0"></div>
<div class="a" style="left:648.3px;top:370.8px;width:8.6px;height:8.6px;border:1.3px solid #fff"></div>
<div class="a" style="left:650.9px;top:373.4px;width:3.4px;height:3.4px;border:1px solid #fff"></div>
<div class="a" style="left:660px;top:369.5px;width:1px;height:12px;background:#86a9cf"></div>
<div class="a" style="left:663.5px;top:370.4px;font-size:8.4px;line-height:10px;color:#fff;-webkit-text-stroke:0.2px #fff">確認画面へ</div>
<div class="a" style="left:527.6px;top:401px;width:204.2px;height:23.4px;border:1px solid #aab2ba;background:#f5f6f8"></div>
<div class="a" style="left:534.5px;top:407.8px;font-size:7.1px;line-height:10px;color:#444;-webkit-text-stroke:0.2px currentColor">ご注文の際には<span style="margin-right:-2px">、</span><span style="color:#2f6bb8">注意事項</span>を必ずご確認ください。</div>
</body></html>
